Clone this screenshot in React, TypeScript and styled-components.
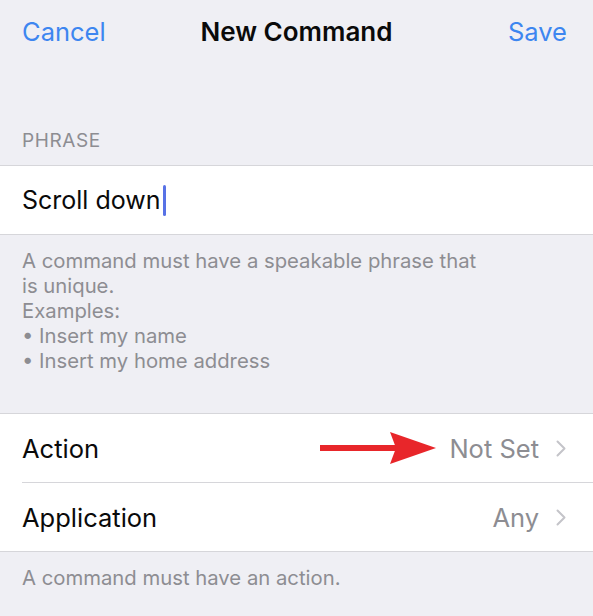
import styled, { createGlobalStyle } from "styled-components";

const GlobalStyle = createGlobalStyle`
  body {
    margin: 0;
    background: #efeff4;
    font-family: "Inter", "Liberation Sans", sans-serif;
  }
`;

const Screen = styled.div`
  width: 593px;
  height: 616px;
  background: #efeff4;
  overflow: hidden;
`;

const NavBar = styled.div`
  height: 62px;
  display: flex;
  align-items: center;
  justify-content: space-between;
  padding: 0 26px 0 22px;
  position: relative;
`;

const NavButton = styled.button`
  background: none;
  border: none;
  padding: 0;
  font-family: inherit;
  font-size: 25.5px;
  color: #3d86f0;
`;

const NavTitle = styled.div`
  position: absolute;
  left: 0;
  right: 0;
  text-align: center;
  font-size: 26px;
  font-weight: 600;
  color: #0a0a0a;
  pointer-events: none;
`;

const SectionHeader = styled.div`
  padding: 0 22px 12px;
  margin-top: 67px;
  font-size: 19px;
  letter-spacing: 0.6px;
  color: #8d8d92;
  line-height: 24px;
`;

const Group = styled.div`
  background: #ffffff;
  border-top: 1px solid #d6d6da;
  border-bottom: 1px solid #d6d6da;
`;

const InputCell = styled.div`
  height: 68px;
  display: flex;
  align-items: center;
  padding-left: 22px;
  font-size: 25px;
  color: #0a0a0a;
`;

const Caret = styled.span`
  display: inline-block;
  width: 3px;
  height: 31px;
  margin-left: 2px;
  border-radius: 2px;
  background: #5872e6;
`;

const Footer = styled.div<{ $bottom: number }>`
  padding: 13px 22px ${(p) => p.$bottom}px;
  font-size: 20.3px;
  line-height: 25px;
  color: #8d8d92;
`;

const Row = styled.div`
  position: relative;
  height: 68px;
  display: flex;
  align-items: center;
  padding-left: 22px;
  font-size: 25.5px;
  color: #0a0a0a;

  & + & {
    border-top: 1px solid transparent;
  }
  & + &::before {
    content: "";
    position: absolute;
    top: -1px;
    left: 22px;
    right: 0;
    height: 1px;
    background: #d6d6da;
  }
`;

const Label = styled.span`
  flex: 1;
`;

const Value = styled.span`
  color: #8d8d92;
  margin-right: 17px;
`;

const Chevron = styled.svg`
  width: 10px;
  height: 17px;
  margin-right: 27px;
`;

const Arrow = styled.svg`
  position: absolute;
  left: 320px;
  top: 50%;
  margin-top: -17px;
  width: 118px;
  height: 34px;
`;

const ChevronIcon = () => (
  <Chevron viewBox="0 0 10 17">
    <path d="M1.5 1.5 L8.5 8.5 L1.5 15.5" fill="none" stroke="#c4c4c9" strokeWidth="2" strokeLinecap="round" strokeLinejoin="round" />
  </Chevron>
);

const App = () => {
  return (
    <Screen>
      <GlobalStyle />
      <NavBar>
        <NavButton>Cancel</NavButton>
        <NavTitle>New Command</NavTitle>
        <NavButton>Save</NavButton>
      </NavBar>

      <SectionHeader>PHRASE</SectionHeader>
      <Group>
        <InputCell>
          Scroll down
          <Caret />
        </InputCell>
      </Group>
      <Footer $bottom={40}>
        A command must have a speakable phrase that
        <br />
        is unique.
        <br />
        Examples:
        <br />• Insert my name
        <br />• Insert my home address
      </Footer>

      <Group>
        <Row>
          <Label>Action</Label>
          <Arrow viewBox="0 0 118 34">
            <rect x="0" y="14" width="76" height="6" fill="#e8262a" />
            <path d="M70 1 L116 17 L70 33 L76 17 Z" fill="#e8262a" />
          </Arrow>
          <Value>Not Set</Value>
          <ChevronIcon />
        </Row>
        <Row>
          <Label>Application</Label>
          <Value>Any</Value>
          <ChevronIcon />
        </Row>
      </Group>
      <Footer $bottom={20}>A command must have an action.</Footer>
    </Screen>
  );
};

export default App;
